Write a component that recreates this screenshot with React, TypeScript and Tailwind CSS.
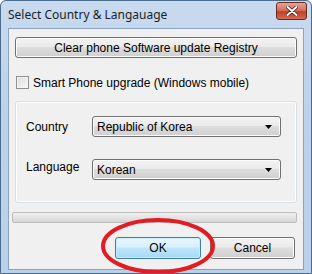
import React from 'react';

const btn =
  'flex items-center justify-center rounded-[3px] border border-[#707070] bg-[linear-gradient(#f2f2f2_0%,#ebebeb_45%,#dddddd_50%,#cfcfcf_100%)] text-[12px] text-black shadow-[inset_0_0_0_1px_#fcfcfc]';

const Combo = ({ value }: { value: string }) => (
  <div className="flex h-[21px] w-[189px] items-center justify-between rounded-[3px] border border-[#707070] bg-[linear-gradient(#f2f2f2_0%,#ebebeb_45%,#dddddd_50%,#cfcfcf_100%)] pl-[4px] pr-[8px] text-[12px] text-black shadow-[inset_0_0_0_1px_#fcfcfc]">
    <span>{value}</span>
    <svg width="7" height="4" viewBox="0 0 7 4">
      <polygon points="0,0 7,0 3.5,4" fill="#000" />
    </svg>
  </div>
);

export default function App() {
  return (
    <div
      className="relative h-[274px] w-[312px] overflow-hidden rounded-t-[6px] border border-[#4b6b8c] bg-[linear-gradient(#c8daef,#bcd2eb_40%,#bad1eb)]"
      style={{ fontFamily: '"Liberation Sans", Arial, sans-serif' }}
    >
      {/* title bar */}
      <div className="flex h-[27px] items-start justify-between">
        <span
          className="ml-[7px] mt-[5px] text-[12px] text-[#1e1e1e]"
          style={{ fontFamily: '"Noto Sans", sans-serif' }}
        >
          Select Country &amp; Langauage
        </span>
        <div className="mr-[4px] mt-[1px] flex h-[18px] w-[31px] items-center justify-center rounded-[3px] border border-[#6a2a22] bg-[linear-gradient(#e8a393,#d5705c_45%,#c1402a_55%,#d3674f)]">
          <svg width="12" height="10" viewBox="0 0 12 10">
            <path d="M1.5 1 L10.5 9 M10.5 1 L1.5 9" stroke="#3a1a14" strokeWidth="3.4" strokeLinecap="round" />
            <path d="M1.5 1 L10.5 9 M10.5 1 L1.5 9" stroke="#fff" strokeWidth="2" strokeLinecap="round" />
          </svg>
        </div>
      </div>

      {/* client area */}
      <div className="mx-[7px] flex h-[242px] flex-col border border-[#8ba3bd] bg-[#f0f0f0] px-[6px]">
        <button className={`${btn} mt-[8px] h-[21px] w-[282px]`}>Clear phone Software update Registry</button>

        <label className="mt-[18px] flex h-[13px] items-center text-[12px] text-black">
          <span className="ml-[1px] h-[13px] w-[13px] border border-[#8e8f8f] bg-[linear-gradient(135deg,#dcdcdc,#f8f8f8)] shadow-[inset_0_0_0_1px_#f4f4f4]" />
          <span className="ml-[4px]">Smart Phone upgrade (Windows mobile)</span>
        </label>

        <div className="mt-[12px] flex h-[102px] w-[282px] flex-col rounded-[3px] border border-[#d5dfe5] pl-[10px] shadow-[inset_0_0_0_1px_#ffffff]">
          <div className="mt-[14px] flex items-center">
            <span className="w-[66px] text-[12px] text-black">Country</span>
            <Combo value="Republic of Korea" />
          </div>
          <div className="mt-[21px] flex items-center">
            <span className="w-[66px] pb-[5px] text-[12px] text-black">Language</span>
            <Combo value="Korean" />
          </div>
        </div>

        <div className="-ml-[3px] mt-[9px] h-[11px] w-[285px] rounded-[2px] border border-[#bcbcbc] bg-[linear-gradient(#f0f0f0,#e4e4e4_50%,#d6d6d6)]" />

        <div className="mt-[14px] flex justify-end gap-[9px] pr-[2px]">
          <button className="flex h-[22px] w-[86px] items-center justify-center rounded-[3px] border border-[#3c7fb1] bg-[linear-gradient(#eaf6fd_0%,#d9f0fc_45%,#bee6fd_50%,#a7d9f5_100%)] text-[12px] text-black shadow-[inset_0_0_0_1px_#c6ecfc]">
            OK
          </button>
          <button className={`${btn} h-[22px] w-[85px]`}>Cancel</button>
        </div>
      </div>

      {/* red highlight circle */}
      <svg className="pointer-events-none absolute left-0 top-0" width="312" height="274">
        <ellipse cx="157" cy="245" rx="55" ry="26" fill="none" stroke="#e31b23" strokeWidth="4" />
      </svg>
    </div>
  );
}
